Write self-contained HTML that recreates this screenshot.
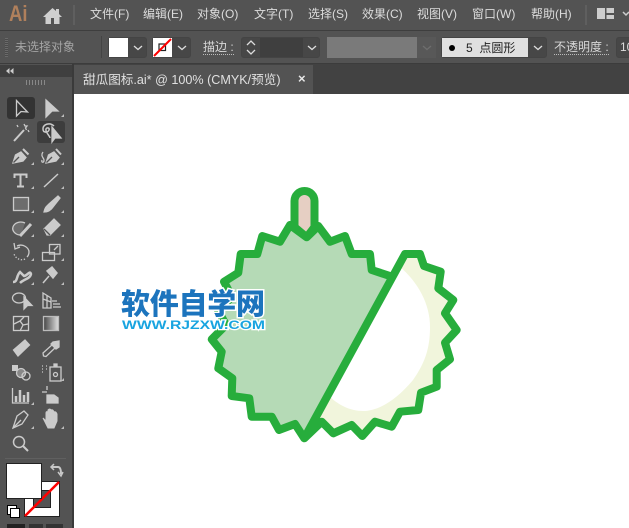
<!DOCTYPE html>
<html><head><meta charset="utf-8">
<style>
html,body{margin:0;padding:0}
body{width:629px;height:528px;overflow:hidden;position:relative;background:#535353;font-family:"Liberation Sans","Noto Sans CJK SC",sans-serif;color:#d8d8d8}
.a{position:absolute;white-space:nowrap}
.m{top:5px;font-size:12px;line-height:18px;color:#dcdcdc}
.s{font-size:12px;line-height:16px}
.box{position:absolute;border:1px solid #444;border-radius:3px;box-sizing:border-box}
svg{position:absolute;overflow:visible}
</style></head><body>
<!-- top rules -->
<div class="a" style="left:0;top:30px;width:629px;height:1px;background:#3e3e3e"></div>
<div class="a" style="left:0;top:63px;width:629px;height:1px;background:#3c3c3c"></div>
<div class="a" style="left:0;top:64px;width:629px;height:30px;background:#424242"></div>

<div class="a" style="left:9px;top:1px;font-size:22px;line-height:26px;font-weight:bold;color:#b0805c;transform:scaleX(.84);transform-origin:0 0">Ai</div>
<svg style="left:43px;top:8px" width="26" height="20" viewBox="0 0 26 20"><path d="M0 9L9.500 0L13 3V1H16V6L19 9H16.500V16H11V10H8V16H2.500V9Z" fill="#cfcfcf"/></svg>
<div class="a" style="left:73px;top:5px;width:2px;height:20px;background:#5f5f5f"></div>
<div class="a m" style="left:90px">文件(F)</div>
<div class="a m" style="left:143px">编辑(E)</div>
<div class="a m" style="left:197px">对象(O)</div>
<div class="a m" style="left:254px">文字(T)</div>
<div class="a m" style="left:308px">选择(S)</div>
<div class="a m" style="left:362px">效果(C)</div>
<div class="a m" style="left:417px">视图(V)</div>
<div class="a m" style="left:472px">窗口(W)</div>
<div class="a m" style="left:531px">帮助(H)</div>
<div class="a" style="left:585px;top:5px;width:2px;height:20px;background:#5f5f5f"></div>
<svg style="left:597px;top:8px" width="32" height="12"><path d="M0 0H8V11H0ZM9.500 0H17V5H9.500ZM9.500 7H17V11H9.500Z" fill="#cdcdcd"/><path d="M26 4L29 7L32 4" fill="none" stroke="#cdcdcd" stroke-width="1.500"/></svg>

<!-- options bar -->
<div class="a" style="left:5px;top:38px;width:3px;height:19px;background:repeating-linear-gradient(#6a6a6a 0 1px,#4a4a4a 1px 2px)"></div>
<div class="a s" style="left:15px;top:39px;color:#a5a5a5">未选择对象</div>
<div class="a" style="left:101px;top:36px;width:1px;height:22px;background:#444"></div>
<div class="box" style="left:108px;top:37px;width:39px;height:21px;background:#474747"></div>
<div class="a" style="left:109px;top:38px;width:19px;height:19px;background:#fff"></div>
<svg style="left:133px;top:45px" width="10" height="6"><path d="M1 1L5 4.500L9 1" fill="none" stroke="#ddd" stroke-width="1.300"/></svg>
<div class="box" style="left:152px;top:37px;width:39px;height:21px;background:#474747"></div>
<div class="a" style="left:153px;top:38px;width:19px;height:19px;background:#fff"></div>
<svg style="left:153px;top:38px" width="19" height="19"><rect x="6" y="6" width="6.500" height="6.500" fill="none" stroke="#222" stroke-width="1.200"/><path d="M1 18L18 1" stroke="#f00" stroke-width="2"/></svg>
<svg style="left:177px;top:45px" width="10" height="6"><path d="M1 1L5 4.500L9 1" fill="none" stroke="#ddd" stroke-width="1.300"/></svg>
<div class="a s" style="left:203px;top:40px;color:#d8d8d8;border-bottom:1px dotted #bbb;line-height:14px">描边 :</div>
<div class="box" style="left:241px;top:37px;width:79px;height:21px;background:#474747"></div>
<div class="a" style="left:260px;top:38px;width:43px;height:19px;background:#3f3f3f"></div>
<svg style="left:246px;top:39px" width="11" height="17"><path d="M1 6L5 2L9 6M1 11L5 15L9 11" fill="none" stroke="#ddd" stroke-width="1.300"/></svg>
<svg style="left:307px;top:45px" width="10" height="6"><path d="M1 1L5 4.500L9 1" fill="none" stroke="#ddd" stroke-width="1.300"/></svg>
<div class="a" style="left:327px;top:37px;width:90px;height:21px;background:#7a7a7a"></div>
<div class="a" style="left:417px;top:37px;width:19px;height:21px;background:#585858"></div>
<svg style="left:422px;top:45px" width="10" height="6"><path d="M1 1L5 4.500L9 1" fill="none" stroke="#6e6e6e" stroke-width="1.300"/></svg>
<div class="box" style="left:441px;top:37px;width:106px;height:21px;background:#474747"></div>
<div class="a" style="left:442px;top:38px;width:86px;height:19px;background:#e0e0e0"></div>
<div class="a" style="left:449px;top:45px;width:6px;height:6px;border-radius:50%;background:#000"></div>
<div class="a s" style="left:466px;top:40px;color:#222;line-height:16px">5&nbsp; 点圆形</div>
<svg style="left:533px;top:45px" width="10" height="6"><path d="M1 1L5 4.500L9 1" fill="none" stroke="#ddd" stroke-width="1.300"/></svg>
<div class="a s" style="left:554px;top:40px;color:#d8d8d8;border-bottom:1px dotted #bbb;line-height:14px">不透明度 :</div>
<div class="box" style="left:616px;top:37px;width:20px;height:21px;background:#474747;color:#ddd;font-size:12px;line-height:19px;padding-left:3px">100</div>

<!-- tab row -->
<div class="a" style="left:0;top:64px;width:73px;height:464px;background:#535353"></div>
<div class="a" style="left:0;top:65px;width:72px;height:12px;background:#3f3f3f"></div>
<svg style="left:6px;top:68px" width="8" height="6"><path d="M3.500 0V6L0 3ZM7.500 0V6L4 3Z" fill="#ccc"/></svg>
<div class="a" style="left:26px;top:80px;width:20px;height:5px;background:repeating-linear-gradient(90deg,#888 0 1px,#535353 1px 3px)"></div>
<div class="a" style="left:72px;top:64px;width:2px;height:464px;background:#3a3a3a"></div>
<div class="a" style="left:74px;top:65px;width:239px;height:29px;background:#535353"></div>
<div class="a" style="left:83px;top:72px;font-size:12.600px;line-height:16px;color:#e0e0e0">甜瓜图标.ai* @ 100% (CMYK/预览)</div>
<div class="a" style="left:298px;top:71px;font-size:13px;line-height:16px;font-weight:bold;color:#e8e8e8">×</div>

<!-- canvas -->
<div class="a" style="left:74px;top:94px;width:555px;height:434px;background:#fff"></div>

<!-- artwork -->
<svg style="left:0;top:0" width="629" height="528" viewBox="0 0 629 528">
<path d="M294.500 227V201A10 10 0 0 1 314.500 201V227L306.700 237.300Z" fill="#e6cfc3" stroke="#27ad3c" stroke-width="8" stroke-linejoin="round"/>
<path d="M405 254H420L424 266L440.700 271.700L438.300 288.300L453.300 300L445 313.300L456.700 330L445 342.700L450 359.300L436.700 370L436.700 386.700L421 392.700L418.300 410L400 411.700L391.700 426.700L375 421.700L362.300 436L351.700 425L333.300 433.300L321.700 421.700L304.300 438.300Z" fill="#f1f5dc"/>
<path d="M399 266C418 282 430 304 430 327C430 350 424 364 413 380C398 398 380 411 363 411C350 411 338 405 328 395Z" fill="#fff"/>
<path d="M306.700 237.300L290 225L280 241.700L262.300 236L257.300 254H240.700L238.300 272.700L224 281.700L232 297L218 310L226 325L211.700 339.300L221.700 351.700L218.300 368.300L232.300 378.300L231.700 396L249.300 398.300L251.700 416.700H271.700L279 430L295 424L304.300 438.300L392 276.700L371.700 270L370 254H351.700L345 236L330 241.700L318.300 226Z" fill="#b5dab6"/>
<path d="M306.700 237.300L290 225L280 241.700L262.300 236L257.300 254H240.700L238.300 272.700L224 281.700L232 297L218 310L226 325L211.700 339.300L221.700 351.700L218.300 368.300L232.300 378.300L231.700 396L249.300 398.300L251.700 416.700H271.700L279 430L295 424L304.300 438.300L321.700 421.700L333.300 433.300L351.700 425L362.300 436L375 421.700L391.700 426.700L400 411.700L418.300 410L421 392.700L436.700 386.700V370L450 359.300L445 342.700L456.700 330L445 313.300L453.300 300L438.300 288.300L440.700 271.700L424 266L420 254H405L304.300 438.300M392 276.700L371.700 270L370 254H351.700L345 236L330 241.700L318.300 226L306.700 237.300" fill="none" stroke="#27ad3c" stroke-width="8" stroke-linejoin="round" stroke-linecap="round"/>
<text x="121" y="314" font-family="Liberation Sans,Noto Sans CJK SC,sans-serif" font-size="29" font-weight="900" fill="#1c74bd" stroke="#fff" stroke-width="3" paint-order="stroke" textLength="144">软件自学网</text>
<text x="122" y="329" font-family="Liberation Sans,sans-serif" font-size="12" font-weight="bold" fill="#18a4e0" stroke="#fff" stroke-width="2.500" paint-order="stroke" textLength="143" lengthAdjust="spacingAndGlyphs">WWW.RJZXW.COM</text>
</svg>

<!-- tools -->
<div class="a" style="left:7px;top:97px;width:28px;height:22px;background:#333;border-radius:3px"></div>
<div class="a" style="left:37px;top:121px;width:28px;height:22px;background:#3d3d3d;border-radius:3px"></div>
<svg style="left:0;top:0" width="73" height="528" viewBox="0 0 73 528" fill="none" stroke="#cbcbcb" stroke-width="1.300">
<defs><linearGradient id="g"><stop offset="0" stop-color="#444"/><stop offset="1" stop-color="#e0e0e0"/></linearGradient></defs>
<path d="M16.500 100.500V116L21 111.500L27.500 112Z"/>
<path d="M46 100V117L52 111H58Z" fill="#cbcbcb"/>
<path d="M14 141L24 130" stroke-width="2"/><path d="M24 124L25 126L27 126L25.500 128L26.500 130M17 125L18 127M28 130L29 132"/>
<path d="M54 126C50 122 43 124 43 129C43 133 48 133 49 130C50 128 47 127 46 129C45 132 50 136 50 138" stroke-width="1.500"/><path d="M52 127V142L55 138L61 138Z" fill="#cbcbcb"/>
<path d="M13 163L15.500 155L21 152L26 157.500L23 161Z" fill="#cbcbcb"/><path d="M23 149L28.500 154.500" stroke-width="2"/><path d="M13.500 162.500L19 157" stroke="#535353"/>
<path d="M43 152C40 156 44 158 44 160C44 163 41 163 42 160" stroke-width="1.300"/><path d="M46 163L48.500 155L54 152L59 157.500L56 161Z" fill="#cbcbcb"/><path d="M56 149L61 154.500" stroke-width="2"/><path d="M46.500 162.500L52 157" stroke="#535353"/>
<path d="M14.500 178V174.500H26.500V178M20.500 174.500V186.500M17 186.500H24" stroke-width="2"/>
<path d="M44 187L58 174" stroke-width="1.500"/>
<rect x="13.500" y="197.500" width="15" height="13" fill="#6d6d6d"/>
<path d="M44 212C45 207 47 206 49 204L58 196L60 198L53 207C51 210 48 212 44 212Z" fill="#cbcbcb"/>
<path d="M21 235A8 6.500 0 1 1 25 223" fill="#6d6d6d"/><path d="M20 236L31 224" stroke-width="3"/>
<path d="M44 229L54 219L60 225L50 235H47Z" fill="#cbcbcb"/><path d="M44 229L50 235" stroke="#535353"/>
<path d="M17 246C23 243 29 248 29 252C29 254 28 256 27 257"/><path d="M14 243L15 249L20 247"/><path d="M25 259C21 261 16 259 14 254" stroke-dasharray="1.300 1.700"/>
<rect x="42.500" y="252.500" width="12" height="8"/><rect x="49.500" y="244.500" width="10.500" height="9.500"/><path d="M54 250L58 246"/>
<path d="M13 282C18 282 16 276 20 272L24 276C27 276 30 270 31 274C30 279 24 279 20 283" stroke-width="2.500"/>
<path d="M43 283L49 276" stroke-width="1.500"/><path d="M47 271L52 267L57 273L53 278Z" fill="#cbcbcb" stroke-width="1.500"/>
<ellipse cx="19" cy="298" rx="6.500" ry="5"/><path d="M24 297V309L27.500 305.500H32Z" fill="#cbcbcb"/>
<path d="M43 293L51 298V308H43ZM43 299L51 302M47 295V308"/><path d="M53 304H60M52 301H57M53 307H61"/>
<rect x="13.500" y="316.500" width="15" height="14"/><path d="M14 324L20 321L23 325L20 331M20 321L24 317M23 325L28 324"/>
<rect x="43.500" y="316.500" width="15" height="14" fill="url(#g)" stroke="#bbb"/>
<path d="M13.500 350L25 340L29.500 345L18 356Z" fill="#cbcbcb"/>
<path d="M43.500 356L43 353L53 344L56 347L46 356.500Z"/><path d="M53 342L59 341L59 347L56 349L51 344Z" fill="#cbcbcb"/>
<rect x="12" y="365" width="6" height="6" fill="#cbcbcb" stroke="none"/><circle cx="21" cy="373" r="4.500" fill="#888"/><circle cx="26" cy="376" r="4"/>
<path d="M42 366H44M46 366H48M42 369H44M46 369H48M42 372H44" stroke-dasharray="1 1"/><rect x="50" y="367" width="11" height="14"/><circle cx="55.500" cy="374.500" r="2"/><path d="M54 367V364H57V367" fill="#cbcbcb"/>
<path d="M12.500 388V403H29"/><path d="M16 396V402M20 390V402M24 395V402M28 392V402" stroke-width="2.500"/>
<path d="M42 392H47M47 386V390"/><path d="M47 395H54L58 398V403H47Z" fill="#cbcbcb"/>
<path d="M13 428L17 416L24 411L28 415L22 424Z"/><path d="M13 428L21 420"/>
<path d="M43 418L46 421V413Q46 411 48 412V410Q50 408 51 410V410Q53 409 54 412Q56 411 57 414V421L54 428H48Z" fill="#cbcbcb" stroke-width="1"/>
<circle cx="19" cy="442" r="5.500" stroke-width="1.500"/><path d="M23 446L28 451" stroke-width="2"/>
</svg>
<svg style="left:0;top:0" width="73" height="528" viewBox="0 0 73 528" fill="#bdbdbd">
<path d="M64 117h-3l3-3ZM34 165h-3l3-3ZM64 165h-3l3-3ZM34 189h-3l3-3ZM64 189h-3l3-3ZM34 213h-3l3-3ZM64 213h-3l3-3ZM34 237h-3l3-3ZM64 237h-3l3-3ZM34 261h-3l3-3ZM64 261h-3l3-3ZM34 285h-3l3-3ZM64 285h-3l3-3ZM34 429h-3l3-3ZM64 429h-3l3-3ZM34 405h-3l3-3ZM64 381h-3l3-3Z"/>
</svg>
<div class="a" style="left:5px;top:458px;width:61px;height:1px;background:#606060"></div>

<!-- fill/stroke -->
<div class="a" style="left:24px;top:481px;width:36px;height:36px;background:#fff;border:1px solid #222;box-sizing:border-box"></div>
<div class="a" style="left:33px;top:490px;width:18px;height:18px;background:#535353;border:1px solid #222;box-sizing:border-box"></div>
<svg style="left:24px;top:481px" width="36" height="36"><path d="M1 35L35 1" stroke="#f00" stroke-width="2.500"/></svg>
<div class="a" style="left:6px;top:463px;width:36px;height:36px;background:#fff;border:1px solid #222;box-sizing:border-box"></div>
<svg style="left:50px;top:464px" width="13" height="13" fill="none" stroke="#c8c8c8" stroke-width="2"><path d="M2 3H8C10 3 11 5 11 10"/><path d="M4 0L1 3L4 6M8 8L11 12L13 8" stroke-width="1.500"/></svg>
<div class="a" style="left:7px;top:505px;width:8px;height:8px;background:#fff;border:1px solid #000"></div>
<div class="a" style="left:10px;top:508px;width:8px;height:8px;background:#fff;border:1px solid #000"></div>
<div class="a" style="left:7px;top:524px;width:18px;height:4px;background:#222"></div>
<div class="a" style="left:29px;top:524px;width:14px;height:4px;background:#333"></div>
<div class="a" style="left:46px;top:524px;width:17px;height:4px;background:#333"></div>
</body></html>
